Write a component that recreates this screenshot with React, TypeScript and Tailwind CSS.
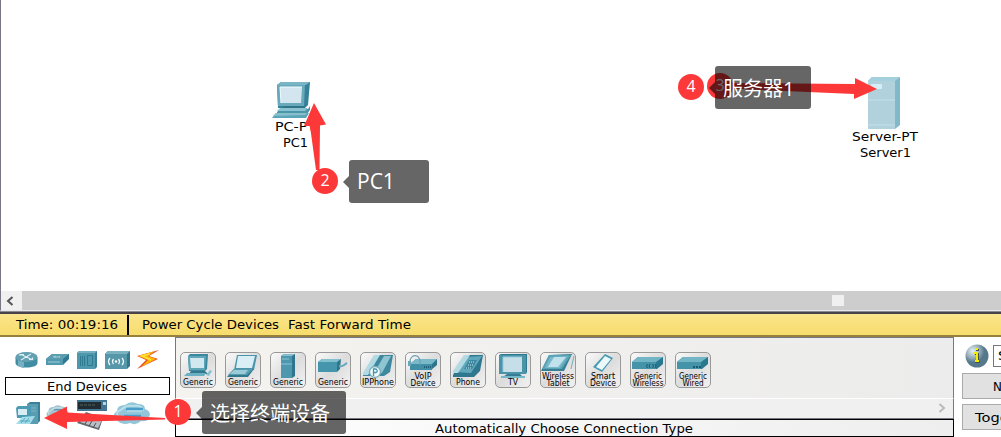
import React from "react";

const T = ({ w, x, y, s = 13, children, fill = "#000" }: { w: number; x: number; y: number; s?: number; children: string; fill?: string }) => (
  <text x={x} y={y} fontSize={s} textLength={w} lengthAdjust="spacingAndGlyphs" fill={fill}>{children}</text>
);

function Label({ w, children, s = 13, base = 13 }: { w: number; children: string; s?: number; base?: number }) {
  return (
    <svg width={w} height={18} className="block shrink-0 overflow-visible">
      <T w={w} x={0} y={base} s={s}>{children}</T>
    </svg>
  );
}

function Pc() {
  return (
    <svg width="40" height="38" viewBox="0 0 40 38">
      <path d="M5 4 9 1h29l-2 23-3 3H6z" fill="#348199" />
      <path d="M5 4 9 1h29l-4 3z" fill="#7ab5c5" />
      <path d="M5 4h28l-1 21H6z" fill="#68a9bb" />
      <path d="M8 6h22l-1 16H9z" fill="#d3e5ee" />
      <path d="M9 22 8 6h22" stroke="#f2fbff" fill="none" />
      <path d="M12 25h20l2 4H9z" fill="#2f7389" />
      <path d="m5 31 3-3h28l2-3v4l-3 4H5z" fill="#4a96ab" />
      <path d="m5 30 3-3h28l-3 3z" fill="#8bc2cf" />
      <path d="m0 37 4-5h33l-3 5z" fill="#5ba5b8" />
      <path d="m1 35 3-3h31l-2 2z" fill="#87bfcd" />
    </svg>
  );
}

function Server() {
  return (
    <svg width="33" height="52" viewBox="0 0 33 52">
      <path d="M1 4 5 0h28v48l-5 4H1z" fill="#82b9c9" />
      <path d="M1 4 5 0h28l-5 4z" fill="#a4d1dd" />
      <path d="M1 4h27v48H1z" fill="#b1d2dc" />
      <path d="M1 23h27M1 48h27" stroke="#c3e0e8" />
      <path d="M4 7h11v5H4z" fill="#d5edf5" />
    </svg>
  );
}

const art: Record<string, React.ReactNode> = {
  pc: <><path d="m8 4 2-2h18l-1 15-2 2H9z" fill="#3a879e" /><path d="M8 4h18l-1 14H9z" fill="#5fa6b9" /><path d="M10 6h14v10H11z" fill="#d2e8f0" /><path d="M11 19h14l3 3H9z" fill="#32798f" /><path d="M7 21h19l-2 3H4z" fill="#6ab0c2" /><path d="m26 23 4-5 2 1-3 5z" fill="#86c2d0" /></>,
  laptop: <><path d="M12 3h20l-3 15H9z" fill="#4b95ab" /><path d="M13 4h17l-3 12H11z" fill="#d9eef5" /><path d="M9 17h20l-6 8H2z" fill="#32798f" /><path d="M9 17h19l-6 6H3z" fill="#559eb2" /><path d="M9 18h14l-3 4H5z" fill="#9bcbd7" /></>,
  server: <><path d="m11 4 3-2h11v22l-3 2H11z" fill="#2f768c" /><path d="m11 4 3-2h11l-3 2z" fill="#85bfce" /><path d="M11 4h11v22H11z" fill="#4d98ae" /><path d="M12 7h7m-8 5h11" stroke="#8dc5d5" fill="none" /></>,
  box: <><path d="m3 10 4-3h19l-1 10-3 3H3z" fill="#2f768c" /><path d="M3 10h19v10H3z" fill="#4595ac" /><path d="m3 10 4-3h19l-4 3z" fill="#82c0d0" /><path d="M24 14c5 1 4-1 8-3" stroke="#66aabd" strokeWidth="2" fill="none" /></>,
  phone: <><path d="m3 23 9-16 7-4h14l-3 16-6 6H3z" fill="#2e778e" /><path d="M4 20 14 5l18-1L21 21z" fill="#5fa8bc" /><path d="M3 19 14 3h6L8 21H3z" fill="#b3d9e3" /><path d="M19 8h8l-5 9h-8z" fill="#3d889e" /><path d="M19 10h6m-7 3h6m-8 3h6" stroke="#c9e7ee" strokeDasharray="1 1" /></>,
  ip: <><path d="m3 23 9-16 6-4h15l-3 17-6 4H3z" fill="#3d889e" /><path d="M3 21 14 3h6L8 23H3z" fill="#b3d9e3" /><path d="M24 4h7l-9 17h-8z" fill="#8fc4d1" /><circle cx="15" cy="20" r="5.5" fill="#f1f8fa" stroke="#73adbd" strokeWidth="1.3" /><path d="M13.500 24v-7h2.500q2.500 2 0 3.500h-2.500" fill="none" stroke="#4495aa" strokeWidth="1.3" /></>,
  voip: <><path d="m5 12 6-5h21v6l-6 5H5z" fill="#2c758c" /><path d="M5 12h22v6H5z" fill="#408fa6" /><path d="m5 12 6-5h21l-5 5z" fill="#7ab9c9" /><path d="M5 10c0-8 10-9 10 0v3" fill="none" stroke="#709fb0" strokeWidth="1.3" /><path d="M3 9h3v5H3z" fill="#6ca5b7" /><path d="M19 15h7" stroke="#1c5c74" strokeWidth="2" strokeDasharray="1 1" /></>,
  tv: <><path d="M4 3h27v19H4z" fill="#4a94aa" /><path d="m4 3 2-1h26v18l-1 2V3z" fill="#2f778d" /><path d="M8 5h19v15H8z" fill="#c6dee8" /><path d="M8 20V5h19" stroke="#98ccda" fill="none" /><path d="M12 22h13l3 3H8z" fill="#357b92" /><path d="M6 24h24v2H6z" fill="#75b8c9" /></>,
  tablet: <><path d="m9 3 23-1-8 17H1z" fill="#357e94" /><path d="M9 3h22l-9 14H2z" fill="#5ba3b6" /><path d="m10 5 18-1-8 12H5z" fill="#78b8ca" /><path d="m14 5 12 0-8 10H8z" fill="#c1e2ec" /><path d="m34 4-3 13" stroke="#78aebb" /></>,
  smart: <><path d="m20 2 8 4-11 14-9-5z" fill="#469ab0" /><path d="m20 4 6 3-9 11-6-3z" fill="#edf8fb" /></>,
  wireless: <><path d="m2 10 6-5h25v7l-6 5H2z" fill="#287990" /><path d="M2 10h24v7H2z" fill="#4593a8" /><path d="m2 10 6-5h25l-7 5z" fill="#72b6c6" /><path d="M17.500 12q-2 2 0 4m2.500-4q-2 2 0 4m5-4q2 2 0 4m-2.500-4q2 2 0 4" stroke="#185a70" fill="none" /></>,
  wired: <><path d="m2 10 6-5h25v7l-6 5H2z" fill="#287990" /><path d="M2 10h24v7H2z" fill="#4593a8" /><path d="m2 10 6-5h25l-7 5z" fill="#72b6c6" /><path d="M18 15h8" stroke="#185a70" strokeWidth="2" strokeDasharray="2 1" /></>,
};

const devices: { a: string; l: [string, number][] }[] = [
  { a: "pc", l: [["Generic", 30]] }, { a: "laptop", l: [["Generic", 30]] }, { a: "server", l: [["Generic", 30]] }, { a: "box", l: [["Generic", 30]] },
  { a: "ip", l: [["IPPhone", 32]] }, { a: "voip", l: [["VoIP", 17], ["Device", 25]] }, { a: "phone", l: [["Phone", 24]] }, { a: "tv", l: [["TV", 10]] },
  { a: "tablet", l: [["Wireless", 32], ["Tablet", 23]] }, { a: "smart", l: [["Smart", 24], ["Device", 26]] },
  { a: "wireless", l: [["Generic", 28], ["Wireless", 31]] }, { a: "wired", l: [["Generic", 28], ["Wired", 21]] },
];

function Device({ a, l }: { a: string; l: [string, number][] }) {
  return (
    <div className="h-9 w-9 shrink-0 rounded-[5px] border border-[#999] bg-gradient-to-br from-[#fafafa] via-[#dcdcdc] to-[#f2f2f2]">
      <svg width="36" height="36" viewBox="0 0 36 36" className="-ml-px -mt-px overflow-visible">
        {art[a]}
        {l.map(([t, w], i) => <T key={t} w={w} x={18 - w / 2} y={(l.length > 1 ? 34 : 33) - (l.length - 1 - i) * 7.5} s={8.5}>{t}</T>)}
      </svg>
    </div>
  );
}

function Cloud({ w = 37, h = 23 }: { w?: number; h?: number }) {
  return (
    <svg width={w} height={h} viewBox="0 0 37 23" preserveAspectRatio="none">
      <path d="M3 17q-5-4 1-8 0-6 8-6 6-5 13-1 7 0 7 5 7 3 4 8 0 5-8 4-5 5-11 2-9 3-14-4" fill="#92c6d8" />
      <path d="M5 14q-3-4 3-6 5-5 12-4 9-1 10 5" fill="none" stroke="#b9dfe9" strokeWidth="2" />
      <path d="M13 7h17M11 14h17" stroke="#499fca" strokeWidth="2.5" /><path d="M14 9h15M12 16h15" stroke="#c4e8f3" />
    </svg>
  );
}

function Categories() {
  return (
    <div className="flex w-[175px] shrink-0 flex-col pt-[12px]">
      <div className="flex h-[21px] items-center pl-[15px]">
        <svg width="23" height="18" viewBox="0 0 23 18"><path d="M.5 6v6c0 6 22 6 22 0V6" fill="#3f8ca3" /><path d="M3 9v6q4 2 6 2v-6" fill="#75afc0" /><ellipse cx="11.500" cy="6" rx="11" ry="5" fill="#649fb2" /><path d="m6 3.500 11 5M16 3 6 9M5 5V3.500h4m5 5h3.500V6.500" stroke="#d9f0f6" strokeWidth="1.2" fill="none" /></svg>
        <svg width="24" height="13" viewBox="0 0 24 13" className="ml-[7px]"><path d="m1 6 6-5h17v5l-6 6H1z" fill="#2e7890" /><path d="M1 6h17v6H1z" fill="#5399ad" /><path d="m1 6 6-5h17l-6 5z" fill="#5c9eb0" /><path d="M8 4h7l-1-1m-3 1-2-1M3 9h12" stroke="#b5dce6" strokeWidth=".8" fill="none" /></svg>
        <svg width="20" height="18" viewBox="0 0 20 18" className="ml-[8px]"><path d="m0 2 2-2h18v16l-2 2H0z" fill="#3a8097" /><path d="m0 2 2-2h18l-2 2z" fill="#75afc0" /><path d="M0 2h18v16H0z" fill="#4e98ad" /><path d="M3.500 5v10m2-10v10m2-10v10M10.500 4.500h5v10h-5z" stroke="#327a92" fill="none" /></svg>
        <svg width="26" height="20" viewBox="0 0 26 20" className="ml-[8px]"><path d="m0 4 3-3h22v15l-3 3H0z" fill="#35768c" /><path d="M0 4h22v15H0z" fill="#5797aa" /><path d="m0 4 3-3h22l-3 3z" fill="#7bb2c1" /><path d="M5 8q-3 3.500 0 7m3.500-6q-2 2.500 0 5m8.500-6q3 3.500 0 7m-3.500-6q2 2.500 0 5" stroke="#f0fafc" strokeWidth="1.3" fill="none" /><circle cx="11" cy="11.500" r="1.2" fill="#fff" /></svg>
        <svg width="24" height="21" viewBox="0 0 24 21" className="ml-[5px]"><path d="M23 1 1 7l9 4-9 9 21-10-9-3z" fill="#e9482c" /><path d="M19 2 2 7l10 4-7 7 15-8-8-3z" fill="#ffb400" /><path d="m14 5-8 2 9 4" fill="none" stroke="#ffe438" strokeWidth="1.5" /></svg>
      </div>
      <div className="ml-[5px] mt-[7px] flex h-[18px] w-[165px] items-center justify-center border border-black"><div className="-ml-px"><Label w={80} base={14}>End Devices</Label></div></div>
      <div className="ml-[15px] mt-[5px] flex h-[34px] items-start">
        <svg width="26" height="24" viewBox="0 0 26 24" className="mt-[2px]"><path d="m12 2 3-2h10v19l-3 3H12z" fill="#39809a" /><path d="M12 2h11v20H12z" fill="#5a9db1" /><path d="M14 6h7M14 9h7" stroke="#7eb5c4" /><path d="m1 6 2-2h13v12H2z" fill="#4a9bb3" /><path d="M3 7h9v6H3z" fill="#d7edf3" /><path d="m7 15 13-1-5 8H1z" fill="#a4ddea" /><path d="M5 19h10m-5-3-4 5m8-5-4 5" stroke="#459db5" strokeWidth=".8" /></svg>
        <div className="ml-[5px] mt-[5px] grayscale-[35%]"><Cloud w={23} h={16} /></div>
        <svg width="31" height="34" viewBox="0 0 31 34" className="ml-[8px] -mt-px"><path d="M0 1h30v11H0z" fill="#427493" /><path d="M1 3h23v7H1z" fill="#202c32" /><path d="M3 6h16" stroke="#52605f" strokeDasharray="3 1" /><path d="M26 3h3v3h-3z" fill="#aed9e4" /><path d="m0 24 9-11 17 6-4 12z" fill="#62686e" /><path d="m8 15 17 6-4 8-18-6z" fill="#b9bfc4" /><path d="m8 25 3-5m1 7 3-5m1 7 3-5" stroke="#4a4d50" /></svg>
        <div className="ml-[5px] mt-[2px]"><Cloud /></div>
      </div>
    </div>
  );
}

function Note({ children, w }: { children: React.ReactNode; w: string }) {
  return (
    <div className="flex items-center">
      <div className="h-0 w-0 border-y-[6px] border-r-[6px] border-y-transparent border-r-[#000000]/60" />
      <div className={`flex h-[43px] items-center rounded-[3px] bg-black/60 pl-2 font-['Open_Sans','Noto_Sans_CJK_SC',sans-serif] text-[20px] leading-none text-white ${w}`}>{children}</div>
    </div>
  );
}

function Dot({ n }: { n: number }) {
  return <div className="flex h-[26px] w-[26px] items-center justify-center rounded-full bg-[#fc3838] pb-[2px] font-['Open_Sans',sans-serif] text-[16px] leading-none text-white">{n}</div>;
}

export default function App() {
  return (
    <div className="relative flex h-[437px] w-[1001px] flex-col overflow-hidden bg-white font-['DejaVu_Sans',sans-serif] text-black">
      <main className="relative h-[291px] shrink-0 border-l border-[#777785]">
        <div className="absolute left-[271px] top-[81px]"><Pc /></div>
        <div className="absolute left-[274px] top-[118px]"><Label w={41}>PC-PT</Label></div>
        <div className="absolute left-[282px] top-[134px]"><Label w={25}>PC1</Label></div>
        <div className="absolute left-[866px] top-[77px]"><Server /></div>
        <div className="absolute left-[851px] top-[128px]"><Label w={66}>Server-PT</Label></div>
        <div className="absolute left-[859px] top-[144px]"><Label w={51}>Server1</Label></div>
      </main>
      <div className="flex h-[20px] shrink-0 border-b border-l border-b-[#e8e8e8] border-l-[#777785] bg-[#cdcdcd]">
        <div className="flex w-[21px] items-center justify-center bg-[#f0f0f0] pr-[3px]"><svg width="8" height="10" viewBox="0 0 8 10"><path d="M6.500 1 2 5l4.500 4" fill="none" stroke="#555" strokeWidth="2" /></svg></div>
        <div className="ml-[810px] mt-[4px] h-[11px] w-[12px] bg-[#f0f0f0]" />
      </div>
      <div className="h-px shrink-0 bg-[#8a8a90]" />
      <div className="flex h-[25px] shrink-0 items-center border-b-2 border-t-2 border-b-[#97803a] border-t-[#47434c] bg-gradient-to-b from-[#fbe48c] to-[#f7dd6b] pl-4">
        <Label w={102}>Time: 00:19:16</Label>
        <div className="ml-[9px] h-[20px] w-[2px] bg-black" />
        <div className="ml-[13px]"><Label w={137}>Power Cycle Devices</Label></div>
        <div className="ml-[9px]"><Label w={123}>Fast Forward Time</Label></div>
      </div>
      <div className="flex h-[100px] shrink-0">
        <Categories />
        <section className="flex w-[779px] shrink-0 flex-col">
          <div className="flex h-[61px] border-x border-t border-[#777785] bg-gradient-to-r from-[#f4f3ef] to-[#ececec] pl-[4px] pt-[14px]">
            <div className="flex gap-[9px]">{devices.map((d, i) => <Device key={i} {...d} />)}</div>
          </div>
          <div className="flex h-[21px] items-center justify-end border-x border-b border-t border-x-[#777785] border-b-[#777785] border-t-white bg-[#f0f0f0] pb-[2px] pr-[7px]"><svg width="8" height="10" viewBox="0 0 8 10"><path d="m1.500 1 4.500 4-4.500 4" fill="none" stroke="#bbb" strokeWidth="2" /></svg></div>
          <div className="flex h-[18px] items-center border border-black bg-gradient-to-r from-white to-[#eee] pl-[259px]"><Label w={258} base={14}>Automatically Choose Connection Type</Label></div>
        </section>
        <aside className="flex w-[47px] shrink-0 flex-col overflow-hidden pl-[8px] pt-[7px]">
          <div className="flex h-[23px] items-center pl-[4px]">
            <svg width="24" height="24" viewBox="0 0 24 24" className="-ml-px shrink-0"><defs><radialGradient id="ball" cx="32%" cy="28%"><stop stopColor="#e3f0f7" /><stop offset=".6" stopColor="#98adb8" /><stop offset="1" stopColor="#55788d" /></radialGradient></defs><circle cx="12" cy="12" r="11.500" fill="url(#ball)" /><path d="M10 10h3v8m-3 0h5M11 6h3" fill="none" stroke="#46534c" strokeWidth="2" /><path d="M9 9h3v8m-2 0h4M10 5h3" fill="none" stroke="#f4ef00" strokeWidth="2" /></svg>
            <div className="ml-[4px] flex h-[22px] w-[60px] shrink-0 items-center border border-[#777] bg-white pl-1"><Label w={9}>S</Label></div>
          </div>
          <div className="mt-[6px] flex h-[26px] w-[80px] shrink-0 items-center border border-[#aaa] bg-[#e1e1e1] pl-[30px]"><Label w={26} base={14}>New</Label></div>
          <div className="mt-[5px] flex h-[26px] w-[80px] shrink-0 items-center border border-[#aaa] bg-[#e1e1e1] pl-[12px]"><Label w={47} base={14}>Toggle</Label></div>
        </aside>
      </div>
      <svg width="1001" height="437" className="pointer-events-none absolute left-0 top-0" fill="#fc3838">
        <path d="M314 103 326 124.500 320 125.500 319.500 170 316 170 310 126 304 126z" />
        <path d="M308 120h8l2 13h-6.500z" />
        <path d="M719 83 855 84 855 78 877 89 854 99 854 94 719 88z" />
        <path d="m44 418 23-11.500v6l98 5.500v1.500L67 422v7z" />
      </svg>
      <div className="absolute left-[312px] top-[168px]"><Dot n={2} /></div>
      <div className="absolute left-[343px] top-[160px]"><Note w="w-[80px]"><span className="text-[21px]">PC1</span></Note></div>
      <div className="absolute left-[678px] top-[74px]"><Dot n={4} /></div>
      <div className="absolute left-[707px] top-[73px]"><Dot n={3} /></div>
      <div className="absolute left-[709px] top-[66px]"><Note w="w-[96px]"><span className="whitespace-nowrap pt-[2px]">服务器1</span></Note></div>
      <div className="absolute left-[165px] top-[399px]"><Dot n={1} /></div>
      <div className="absolute left-[196px] top-[391px]"><Note w="w-[144px]"><span className="whitespace-nowrap pt-[2px]">选择终端设备</span></Note></div>
    </div>
  );
}
